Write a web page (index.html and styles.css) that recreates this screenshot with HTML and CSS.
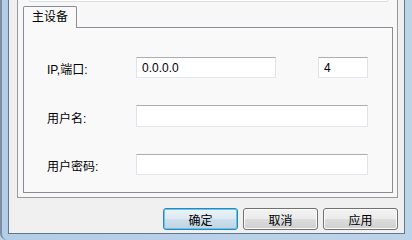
FILE: index.html
```html
<!DOCTYPE html>
<html lang="zh-CN">
<head>
<meta charset="UTF-8">
<title>主设备</title>
<link rel="stylesheet" href="styles.css">
</head>
<body>

<!-- dialog window (cropped) -->
<div class="window">
  <div class="client">

    <div class="frame">
      <div class="top-box"></div>

      <div class="tabs">
        <div class="tab">主设备</div>
      </div>

      <div class="page">
        <div class="row">
          <span class="lbl">IP,端口:</span>
          <div class="input ip">0.0.0.0</div>
          <div class="input port">4</div>
        </div>
        <div class="row tall">
          <span class="lbl">用户名:</span>
          <div class="input wide"></div>
        </div>
        <div class="row">
          <span class="lbl">用户密码:</span>
          <div class="input wide"></div>
        </div>
      </div>
    </div>

    <div class="buttons">
      <div class="btn default">确定</div>
      <div class="btn">取消</div>
      <div class="btn">应用</div>
    </div>

  </div>
</div>

</body>
</html>
```

FILE: styles.css
```css
/* -------- RESET -------- */
*{margin:0;padding:0;box-sizing:border-box}

/* -------- ROOT -------- */
:root{
  --aero:#b9d1ea;
  --client:#f0f0f0;
  --panel:#f9f9f9;
  --tab-border:#898c95;
  --text:#000;
}

body{
  width:412px;height:240px;overflow:hidden;
  font:12px "Liberation Sans","Noto Sans CJK SC",sans-serif;
  color:var(--text);
  background:var(--aero);
}

/* -------- WINDOW FRAME -------- */
.window{
  height:240px;
  padding:0 7px 6px 6px;
  background:linear-gradient(90deg,#b4cde7,#bcd3ea);
  border-left:2px solid #7b8ea3;
  border-bottom-left-radius:7px;
}
.client{
  height:234px;
  background:var(--client);
  border:1px solid #62768c;border-top:0;
  padding:0 6px 0 8px;
  display:flex;flex-direction:column;
}

/* -------- OUTER FRAME -------- */
.frame{
  border:1px solid #9a9a9a;border-top:0;
  padding:0 4px 4px 5px;
  background:#f7f7f7;
}
.top-box{
  height:2px;margin:0 5px 4px 6px;
  border:1px solid #dadde4;border-top:0;
  border-radius:0 0 3px 3px;
  background:#fff;
}

/* -------- TABS -------- */
.tabs{display:flex;position:relative;z-index:1}
.tab{
  height:22px;line-height:21px;
  padding:0 8px;
  border:1px solid var(--tab-border);border-bottom:0;
  border-radius:2px 2px 0 0;
  background:var(--panel);
  margin-bottom:-1px;
}
.page{
  height:166px;
  border:1px solid var(--tab-border);
  background:var(--panel);
  padding:29px 0 0 23px;
}

/* -------- FORM ROWS -------- */
.row{display:flex;align-items:center;height:21px;margin-bottom:27px}
.row.tall{height:22px}
.lbl{width:89px;padding-top:2px}
.input{
  height:100%;
  display:flex;align-items:center;
  padding:0 5px;
  background:#fff;
  border:1px solid #e2e3ea;
  border-top-color:#abadb3;
  border-bottom-color:#e3e9ef;
}
.ip{width:140px}
.port{width:50px;margin-left:42px}
.wide{width:232px}

/* -------- BUTTONS -------- */
.buttons{display:flex;justify-content:flex-end;gap:5px;margin-top:10px}
.btn{
  width:75px;height:22px;
  display:flex;align-items:center;justify-content:center;
  border:1px solid #707070;border-radius:3px;
  background:linear-gradient(#f2f2f2 0%,#ebebeb 50%,#dddddd 50%,#cfcfcf 100%);
  box-shadow:inset 0 0 0 1px #fcfcfc;
}
.btn.default{
  border-color:#3c7fb1;
  background:linear-gradient(#eaf3f9 0%,#dce9f2 50%,#cfe0ec 50%,#bfd3e2 100%);
  box-shadow:inset 0 0 0 1px #55cdf8;
}
```
